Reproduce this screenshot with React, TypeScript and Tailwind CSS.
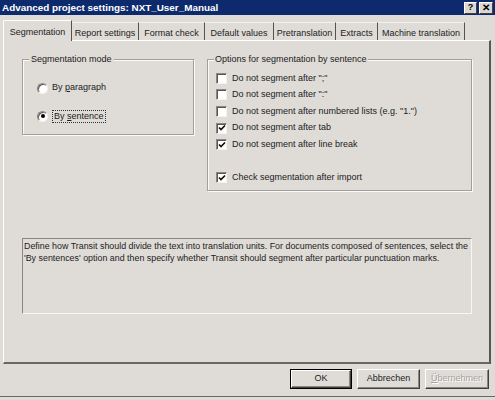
import React from "react";

const Radio = ({ checked }: { checked?: boolean }) => (
  <span className="flex items-center justify-center w-[11px] h-[11px] rounded-full bg-white border border-t-[#8a8682] border-l-[#8a8682] border-r-[#f4f2f0] border-b-[#f4f2f0] shadow-[inset_1px_1px_0_#5a5652]">
    {checked && <span className="w-[4px] h-[4px] rounded-full bg-black" />}
  </span>
);

const Check = ({ checked }: { checked?: boolean }) => (
  <span className="flex items-center justify-center w-[11px] h-[11px] bg-white border border-t-[#8a8682] border-l-[#8a8682] border-r-[#f4f2f0] border-b-[#f4f2f0] shadow-[inset_1px_1px_0_#5a5652]">
    {checked && (
      <svg width="8" height="8" viewBox="0 0 8 8">
        <path d="M1 3.5 L3 5.5 L7 1.5" stroke="#111" strokeWidth="1.7" fill="none" />
      </svg>
    )}
  </span>
);

const tabs: { label: string; w: number }[] = [
  { label: "Segmentation", w: 69 },
  { label: "Report settings", w: 67 },
  { label: "Format check", w: 66 },
  { label: "Default values", w: 69 },
  { label: "Pretranslation", w: 62 },
  { label: "Extracts", w: 42 },
  { label: "Machine translation", w: 87 },
];

const options: { label: string; checked: boolean }[] = [
  { label: 'Do not segment after ";"', checked: false },
  { label: 'Do not segment after ":"', checked: false },
  { label: 'Do not segment after numbered lists (e.g. "1.")', checked: false },
  { label: "Do not segment after tab", checked: true },
  { label: "Do not segment after line break", checked: true },
];

export default function App() {
  return (
    <div className="w-[495px] h-[400px] bg-[#dfdbd7] flex flex-col overflow-hidden font-['Liberation_Sans',Arial,sans-serif] text-[9px] text-[#222]">
      {/* Title bar */}
      <div className="h-[15px] bg-[#0d2b6c] flex items-center justify-between pl-[2px] pr-[2px]">
        <span className="text-white font-bold text-[9.9px] leading-none">
          Advanced project settings: NXT_User_Manual
        </span>
        <div className="flex gap-[2px]">
          <span className="w-[13px] h-[12px] bg-[#dcd8d4] flex items-center justify-center text-[9px] font-bold leading-none text-black border border-t-white border-l-white border-r-[#404040] border-b-[#404040]">
            ?
          </span>
          <span className="w-[14px] h-[12px] bg-[#dcd8d4] flex items-center justify-center text-[10px] font-bold leading-none text-black border border-t-white border-l-white border-r-[#404040] border-b-[#404040]">
            ✕
          </span>
        </div>
      </div>

      {/* Tabs */}
      <div className="mt-[5px] ml-[3px] h-[20px] flex items-end">
        {tabs.map((t, i) =>
          i === 0 ? (
            <div
              key={t.label}
              style={{ width: t.w }}
              className="relative z-10 top-[1px] h-[21px] bg-[#dfdbd7] border-t border-l border-t-white border-l-white border-r border-r-[#56524e] flex items-center justify-center pt-[3px] rounded-tl-[2px]"
            >
              {t.label}
            </div>
          ) : (
            <div
              key={t.label}
              style={{ width: t.w }}
              className="h-[18px] border-t border-t-[#f4f2f0] border-r border-r-[#56524e] flex items-center justify-center pt-[4px]"
            >
              {t.label}
            </div>
          )
        )}
      </div>

      {/* Panel */}
      <div className="ml-[3px] w-[488px] h-[324px] border-t border-l border-t-white border-l-white border-r-2 border-b-2 border-r-[#5a5652] border-b-[#6a6662] flex flex-col pt-[13px] pl-[18px]">
        <div className="flex items-start gap-[13px]">
          <fieldset className="w-[172px] h-[81px] border border-[#a29e9a] shadow-[1px_1px_0_#fafafa,inset_1px_1px_0_#fafafa]">
            <legend className="ml-[6px] px-[2px] bg-[#dfdbd7] leading-[11px]">Segmentation mode</legend>
            <div className="flex flex-col gap-[14px] pt-[16px] pl-[14px]">
              <div className="h-[14px] flex items-center gap-[4px]">
                <Radio />
                <span>
                  By <span className="underline">p</span>aragraph
                </span>
              </div>
              <div className="h-[14px] flex items-center gap-[4px]">
                <Radio checked />
                <span className="border border-dotted border-[#333] px-[1px] leading-[11px]">
                  By <span className="underline">s</span>entence
                </span>
              </div>
            </div>
          </fieldset>

          <fieldset className="w-[265px] h-[137px] border border-[#a29e9a] shadow-[1px_1px_0_#fafafa,inset_1px_1px_0_#fafafa]">
            <legend className="ml-[6px] px-[1px] bg-[#dfdbd7] leading-[11px]">Options for segmentation by sentence</legend>
            <div className="flex flex-col pt-[5px] pl-[8px]">
              {options.map((o) => (
                <div key={o.label} className="h-[16.6px] flex items-center gap-[5px]">
                  <Check checked={o.checked} />
                  <span>{o.label}</span>
                </div>
              ))}
              <div className="mt-[17px] h-[16px] flex items-center gap-[5px]">
                <Check checked />
                <span>Check segmentation after import</span>
              </div>
            </div>
          </fieldset>
        </div>

        <div className="mt-[47px] w-[450px] h-[76px] border border-t-[#8a8682] border-l-[#8a8682] border-r-[#f8f6f4] border-b-[#f8f6f4] pt-[1px] pl-[1px] leading-[12px] whitespace-nowrap text-[8.9px]">
          Define how Transit should divide the text into translation units. For documents composed of sentences, select the
          <br />
          'By sentences' option and then specify whether Transit should segment after particular punctuation marks.
        </div>
      </div>

      {/* Buttons */}
      <div className="mt-[5px] flex justify-end gap-[5px] pr-[6px]">
        <div className="w-[62px] h-[20px] border border-black flex">
          <div className="flex-1 flex items-center justify-center border border-t-white border-l-white border-r-[#404040] border-b-[#404040] shadow-[inset_-1px_-1px_0_#8a8682]">
            OK
          </div>
        </div>
        <div className="w-[63px] h-[20px] flex items-center justify-center border border-t-white border-l-white border-r-[#404040] border-b-[#404040] shadow-[inset_-1px_-1px_0_#8a8682]">
          Abbrechen
        </div>
        <div className="w-[64px] h-[20px] flex items-center justify-center border border-t-white border-l-white border-r-[#404040] border-b-[#404040] shadow-[inset_-1px_-1px_0_#8a8682] text-[#a6a29e] [text-shadow:1px_1px_0_#fff]">
          <span>
            <span className="underline">Ü</span>bernehmen
          </span>
        </div>
      </div>

      <div className="mt-auto mb-[3px] h-[1px] bg-[#6a6662]" />
    </div>
  );
}
